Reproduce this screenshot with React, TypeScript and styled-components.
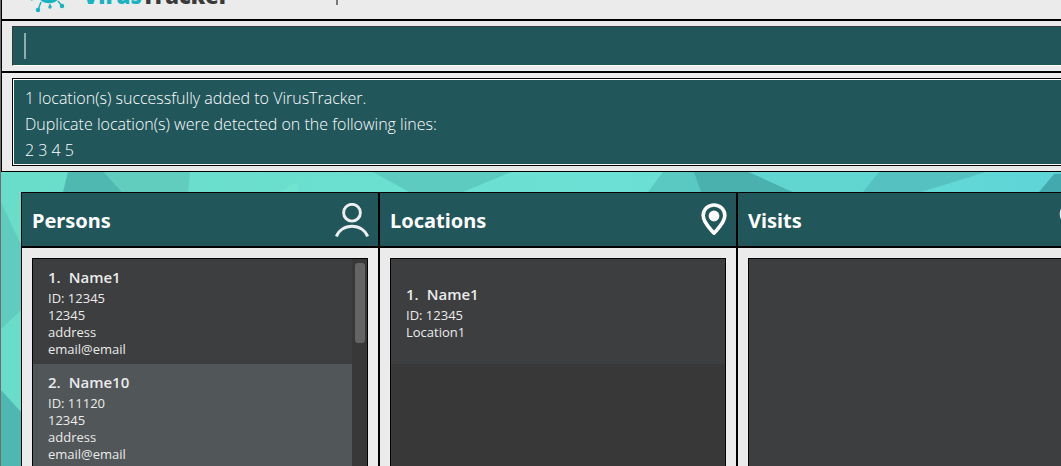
import React from 'react';
import styled, { createGlobalStyle } from 'styled-components';

const GlobalStyle = createGlobalStyle`
  * { box-sizing: border-box; }
  html, body, #root { height: 100%; }
  body {
    margin: 0;
    overflow: hidden;
    background: #ebebeb;
    font-family: 'Open Sans', 'Noto Sans', sans-serif;
  }
`;

const Viewport = styled.div`
  height: 100%;
  overflow: hidden;
`;

const Window = styled.div`
  display: flex;
  flex-direction: column;
  width: max-content;
  min-width: 100%;
  height: 100%;
  border-left: 1px solid #6e6e6e;
`;

const Band = styled.div<{ $rule: number; $pad: string }>`
  flex: none;
  padding: ${p => p.$pad};
  background: #ebebeb;
  border-left: 1px solid #000;
  border-bottom: ${p => p.$rule}px solid #000;
`;

const Header = styled(Band)`
  display: flex;
  align-items: flex-end;
  height: 21px;
  overflow: hidden;
`;

const Logo = styled.svg`
  flex: none;
  width: 40px;
  height: 44px;
  margin: 0 14px 5px 27px;
`;

const Brand = styled.h1`
  margin: 0 0 8px;
  width: 253px;
  font: 800 22px/32px 'Open Sans', sans-serif;
  color: #3a3a3a;
  span { color: #17b3c1; }
`;

const Divider = styled.i`
  width: 2px;
  height: 20px;
  margin-bottom: 14px;
  background: #777;
`;

const CommandInput = styled.input`
  display: block;
  width: 100%;
  height: 40px;
  padding: 0 11px;
  border: 1px solid;
  border-color: #383838 #383838 #fff #383838;
  border-radius: 0;
  outline: none;
  background: #21565a;
  color: #fff;
  font: 300 16px/26px 'Open Sans', sans-serif;
`;

const CommandField = styled.div`
  position: relative;
`;

const Caret = styled.i`
  position: absolute;
  left: 12px;
  top: 7px;
  width: 2px;
  height: 26px;
  background: #8fabad;
`;

const Result = styled.output`
  display: block;
  height: 88px;
  padding: 6px 12px 4px;
  border: 1px solid #000;
  box-shadow: inset 0 0 0 1px #fff;
  background: #21565a;
  color: #fff;
  font: 300 16px/26px 'Open Sans', sans-serif;
  white-space: pre-line;
`;

const Workspace = styled.main`
  flex: 1;
  min-height: 0;
  position: relative;
  padding: 20px 20px 0;
`;

const Backdrop = styled.svg`
  position: absolute;
  inset: 0;
  width: 100%;
  height: 100%;
`;

const Columns = styled.div`
  position: relative;
  display: grid;
  grid-template-columns: repeat(3, minmax(358px, 1fr));
  height: 100%;
`;

const Panel = styled.section`
  display: flex;
  flex-direction: column;
  min-height: 0;
  border: 1px solid #000;
  border-bottom: 0;
  background: #ebebeb;
`;

const PanelHead = styled.header`
  flex: none;
  display: flex;
  align-items: center;
  justify-content: space-between;
  height: 55px;
  padding: 0 9px 0 10px;
  background: #21565a;
  border-bottom: 2px solid #000;
  svg { display: block; }
`;

const PanelTitle = styled.h2`
  margin: 0;
  padding-top: 2px;
  color: #fff;
  font: 700 20px/30px 'Noto Sans', 'Open Sans', sans-serif;
`;

const ListFrame = styled.div<{ $fill: string }>`
  flex: 1;
  min-height: 0;
  display: flex;
  margin: 10px 10px 0;
  border: 1px solid #000;
  border-bottom: 0;
  background: ${p => p.$fill};
  overflow: hidden;
`;

const List = styled.ul`
  flex: 1;
  margin: 0;
  padding: 0;
  list-style: none;
`;

const Cell = styled.li<{ $alt?: boolean }>`
  display: flex;
  flex-direction: column;
  justify-content: center;
  height: 105px;
  padding: 1px 15px 0;
  background: ${p => (p.$alt ? '#515658' : '#3c3e3f')};
  color: #ebebeb;
  font: 400 13px/17px 'Open Sans', sans-serif;
`;

const CellName = styled.div`
  display: flex;
  gap: 8px;
  margin-bottom: 3px;
  font: 600 15px/20px 'Open Sans', sans-serif;
`;

const Track = styled.div`
  flex: none;
  width: 15px;
  padding: 4px 2px 0 3px;
  background: #383838;
`;

const Thumb = styled.div`
  height: 80px;
  border-radius: 3px;
  background: #646464;
`;

type Entry = { name: string; lines: string[] };

const persons: Entry[] = [
  { name: 'Name1', lines: ['ID: 12345', '12345', 'address', 'email@email'] },
  { name: 'Name10', lines: ['ID: 11120', '12345', 'address', 'email@email'] },
];
const locations: Entry[] = [{ name: 'Name1', lines: ['ID: 12345', 'Location1'] }];

function Entries({ items }: { items: Entry[] }) {
  return (
    <List>
      {items.map((item, i) => (
        <Cell key={item.name} $alt={i % 2 === 1}>
          <CellName><span>{i + 1}.</span><span>{item.name}</span></CellName>
          {item.lines.map((line, n) => <div key={n}>{line}</div>)}
        </Cell>
      ))}
    </List>
  );
}

const PersonIcon = () => (
  <svg width="34" height="34" viewBox="0 0 34 34" fill="none" stroke="#ebeff0" strokeWidth="2.9">
    <circle cx="17" cy="9.7" r="8.4" />
    <path d="M1.400 33.500C3.500 27.500 9.500 23.300 17 23.300s13.500 4.200 15.600 10.200" />
  </svg>
);

const PinIcon = () => (
  <svg width="26" height="34" viewBox="0 0 26 34">
    <path d="M13 2C6.800 2 2.200 6.600 2.200 12.600C2.200 19.800 9 25.500 13 30.200C17 25.500 23.800 19.800 23.800 12.600C23.800 6.600 19.200 2 13 2Z" fill="none" stroke="#fff" strokeWidth="3.600" strokeLinejoin="round" />
    <circle cx="13" cy="13" r="5.400" fill="#fff" />
  </svg>
);

const VisitIcon = () => (
  <svg width="26" height="34" viewBox="0 0 26 34" fill="none" stroke="#ebeff0" strokeWidth="2.600">
    <circle cx="13" cy="11" r="11" />
    <path d="M13 4v7l5 4" />
  </svg>
);

function Polygons() {
  return (
    <Backdrop viewBox="0 0 1116 294" preserveAspectRatio="xMinYMin slice" aria-hidden="true">
      <defs>
        <linearGradient id="sea" x1="0" x2="1" y1="0" y2="0">
          <stop offset="0" stopColor="#6addca" />
          <stop offset="0.550" stopColor="#6ce0d4" />
          <stop offset="1" stopColor="#5cd3d8" />
        </linearGradient>
      </defs>
      <rect width="1116" height="294" fill="url(#sea)" />
      <path d="M67 0H103L121 20H62Z" fill="#4fb8b0" />
      <path d="M103 0H189L187 20H121Z" fill="#60cdbf" />
      <path d="M372 0H510L462 20H408Z" fill="#5ecbc1" />
      <path d="M296 10L279 20H298Z" fill="#72e3d1" />
      <path d="M662 0H696L700 20H647Z" fill="#5ac9c2" />
      <path d="M693 0H748L792 20H700Z" fill="#4ab1af" />
      <path d="M748 0H878L862 20H792Z" fill="#61d5cf" />
      <path d="M878 0H985L920 20H862Z" fill="#55c2c1" />
      <path d="M1053 2L1116 0V20H1038Z" fill="#43a9ae" />
      <path d="M0 30L20 73V138L0 157Z" fill="#5fccbf" />
      <path d="M0 218L20 240V294H0Z" fill="#4fb7b1" />
    </Backdrop>
  );
}

export default function App() {
  return (
    <Viewport>
      <GlobalStyle />
      <Window>
        <Header $rule={2} $pad="0">
          <Logo viewBox="0 0 40 44" aria-hidden="true">
            <g stroke="#17b3c1" strokeWidth="1.500" fill="#17b3c1">
              <path d="M12 32L9 40M21 34V38M29 31L33 36M8 28L2 30M33 27L38 28" />
              <circle cx="20" cy="20" r="12.500" />
              <circle cx="9" cy="40" r="1.500" />
              <circle cx="21" cy="37" r="1" />
              <circle cx="33" cy="36" r="1.500" />
            </g>
          </Logo>
          <Brand><span>Virus</span>Tracker</Brand>
          <Divider />
        </Header>
        <Band $rule={2} $pad="5px 10px">
          <CommandField>
            <CommandInput aria-label="Command" />
            <Caret />
          </CommandField>
        </Band>
        <Band $rule={1} $pad="5px 10px">
          <Result>
            {'1 location(s) successfully added to VirusTracker.\nDuplicate location(s) were detected on the following lines:\n2 3 4 5'}
          </Result>
        </Band>
        <Workspace>
          <Polygons />
          <Columns>
            <Panel>
              <PanelHead><PanelTitle>Persons</PanelTitle><PersonIcon /></PanelHead>
              <ListFrame $fill="#383838">
                <Entries items={persons} />
                <Track><Thumb /></Track>
              </ListFrame>
            </Panel>
            <Panel>
              <PanelHead><PanelTitle>Locations</PanelTitle><PinIcon /></PanelHead>
              <ListFrame $fill="#383838"><Entries items={locations} /></ListFrame>
            </Panel>
            <Panel>
              <PanelHead><PanelTitle>Visits</PanelTitle><VisitIcon /></PanelHead>
              <ListFrame $fill="#3c3e3f" />
            </Panel>
          </Columns>
        </Workspace>
      </Window>
    </Viewport>
  );
}
